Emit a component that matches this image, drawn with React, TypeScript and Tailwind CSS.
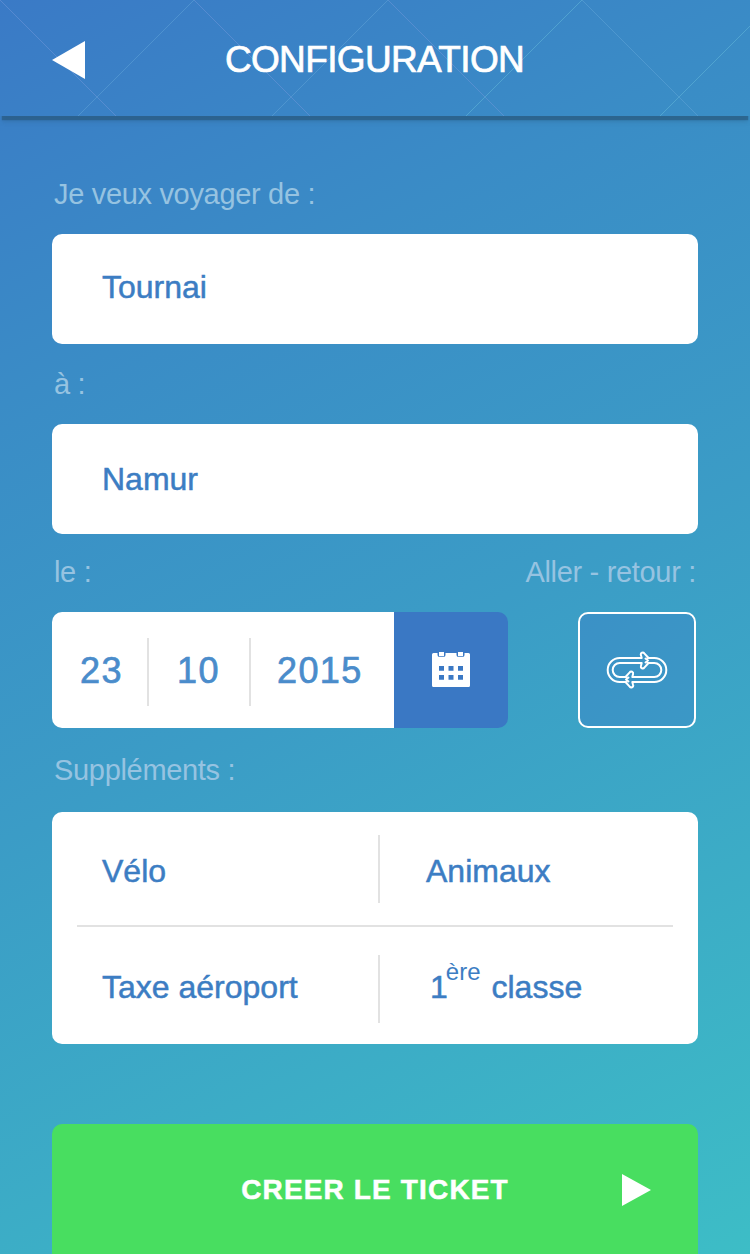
import type { ReactNode } from "react";

function Header() {
  return (
    <header className="relative grid h-[116px] shrink-0 grid-cols-[52px_33px_1fr_85px] items-center">
      <div className="absolute inset-0 shadow-[0_6px_1px_-2px_rgba(38,85,120,0.6),0_8px_4px_-2px_rgba(38,85,120,0.25)]" />
      <svg
        className="absolute inset-0"
        width="750"
        height="116"
        viewBox="0 0 750 116"
        fill="none"
        aria-hidden="true"
      >
        <path d="M0 0l116 116M194 0l116 116M388 0l116 116" stroke="#6d96d8" strokeOpacity=".55" />
        <path d="M194 0L78 116M388 0L272 116M582 0l116 116" stroke="#62a6d8" strokeOpacity=".5" />
        <path d="M582 0L466 116M776 0L660 116" stroke="#62b8d8" strokeOpacity=".55" />
      </svg>
      <svg
        className="relative col-start-2 mt-1"
        width="33"
        height="38"
        viewBox="0 0 33 38"
        fill="white"
        aria-hidden="true"
      >
        <path d="M33 0v38L0 19z" />
      </svg>
      <h1 className="relative mt-[4px] whitespace-nowrap pr-[1px] text-center text-[37px] leading-[44px] tracking-[-0.65px] text-white [-webkit-text-stroke:0.7px_white]">
        CONFIGURATION
      </h1>
    </header>
  );
}

function Label({ children }: { children: ReactNode }) {
  return (
    <span className="block whitespace-nowrap pt-px text-[29px] font-light leading-[39px] tracking-[-0.32px] text-[#96c3e1]">
      {children}
    </span>
  );
}

function Field({ children, className = "" }: { children: ReactNode; className?: string }) {
  return (
    <div
      className={`flex h-[110px] items-center rounded-[10px] bg-white pl-[50px] text-[32px] leading-10 text-[#3c7dc3] [-webkit-text-stroke:0.5px_#3c7dc3] ${className}`}
    >
      {children}
    </div>
  );
}

function CalendarIcon() {
  return (
    <svg width="38" height="36" viewBox="0 0 38 36" aria-hidden="true">
      <path
        fill="white"
        d="M1.500 1h4v2q0 2 2 2h4q2 0 2-2V1h11v2q0 2 2 2h4q2 0 2-2V1h4q1.500 0 1.500 1.500v31q0 1.500-1.500 1.500h-35Q0 35 0 33.500v-31Q0 1 1.500 1z"
      />
      <path fill="white" d="M7 0h5v4.200H7zM26 0h5v4.200h-5z" />
      <path
        fill="#3a78c4"
        d="M7 14h5v4.700H7zM16.500 14h5v4.700h-5zM26 14h5v4.700h-5zM7 23h5v4.700H7zM16.500 23h5v4.700h-5zM26 23h5v4.700h-5z"
      />
    </svg>
  );
}

function LoopHalf() {
  return (
    <>
      <path d="M20.500 31H13.700a12 12 0 0 1 0-24H35.700L34.900 4a1.900 1.900 0 0 1 3.400-1.600L42.500 7" />
      <path d="M20.500 26H13.700a7 7 0 0 1 0-14H35.700L34.900 15a1.900 1.900 0 0 0 3.400 1.600L42.500 12" />
      <path d="M39.500 7.500l2.500 2-2.500 2" />
    </>
  );
}

function RoundTripIcon() {
  return (
    <svg
      width="62"
      height="38"
      viewBox="0 0 62 38"
      fill="none"
      stroke="white"
      strokeWidth="2"
      strokeLinecap="round"
      strokeLinejoin="round"
      aria-hidden="true"
    >
      <LoopHalf />
      <g transform="rotate(180 31 19)">
        <LoopHalf />
      </g>
    </svg>
  );
}

function DateRow() {
  return (
    <div className="mt-5 flex h-[116px] items-stretch justify-between pr-[2px]">
      <div className="flex w-[456px]">
        <div className="flex w-[342px] items-center rounded-l-[10px] bg-white pt-1 text-[36px] leading-10 tracking-[1.4px] text-[#4a8ccb] [-webkit-text-stroke:0.7px_#4a8ccb]">
          <span className="w-[95px] pb-[2px] pl-[28px]">23</span>
          <span className="h-[68px] w-[2px] bg-[#e2e2e2]" />
          <span className="w-[100px] pb-[2px] pl-[28px]">10</span>
          <span className="h-[68px] w-[2px] bg-[#e2e2e2]" />
          <span className="pb-[2px] pl-[26px]">2015</span>
        </div>
        <button className="flex flex-1 items-center justify-center rounded-r-[10px] bg-[#3a78c4]">
          <CalendarIcon />
        </button>
      </div>
      <button className="flex w-[118px] items-center justify-center rounded-[10px] border-2 border-white bg-linear-to-br from-[#3b91c6] to-[#3b98c6]">
        <RoundTripIcon />
      </button>
    </div>
  );
}

function Extras() {
  return (
    <div className="mt-[22px] flex h-[232px] flex-col rounded-[10px] bg-white px-[25px] text-[32px] leading-10 text-[#3c7dc3] [-webkit-text-stroke:0.5px_#3c7dc3]">
      <div className="flex h-[113px] items-center">
        <span className="w-[301px] pl-[25px] pt-1">Vélo</span>
        <span className="h-[68px] w-[2px] bg-[#e2e2e2]" />
        <span className="pl-[46px] pt-1">Animaux</span>
      </div>
      <div className="h-[2px] bg-[#e2e2e2]" />
      <div className="flex h-[117px] items-center pt-[7px]">
        <span className="w-[301px] pb-1 pl-[25px]">Taxe aéroport</span>
        <span className="h-[68px] w-[2px] bg-[#e2e2e2]" />
        <span className="flex pb-1 pl-[50px]">
          1
          <sup className="top-[-15px] ml-[-2px] mr-[11px] text-[24px] leading-10 [-webkit-text-stroke:0px]">
            ère
          </sup>
          classe
        </span>
      </div>
    </div>
  );
}

export default function App() {
  return (
    <div className="flex h-[1254px] w-[750px] flex-col overflow-hidden bg-[linear-gradient(154deg,#3a7ac6_0%,#3a8cc6_25%,#3b9cc6_52%,#3dbdc6_100%)] font-['Liberation_Sans',Arial,sans-serif]">
      <Header />
      <main className="flex flex-1 flex-col px-[52px] pt-[58px]">
        <div className="pl-[2px]">
          <Label>Je veux voyager de :</Label>
        </div>
        <Field className="mt-5 pb-1">Tournai</Field>
        <div className="mt-5 pl-[2px]">
          <Label>à :</Label>
        </div>
        <Field className="mt-5">Namur</Field>
        <div className="mt-[18px] flex justify-between pl-[2px] pr-[2px]">
          <Label>le :</Label>
          <Label>Aller - retour :</Label>
        </div>
        <DateRow />
        <div className="mt-[22px] pl-[2px]">
          <Label>Suppléments :</Label>
        </div>
        <Extras />
        <button className="mt-20 grid h-[130px] grid-cols-[76px_1fr_76px] items-center rounded-t-[10px] bg-[#48de60] text-white">
          <span className="col-start-2 mt-[2px] whitespace-nowrap text-[28px] font-bold leading-10 tracking-[1.15px] [-webkit-text-stroke:0.5px_white]">
            CREER LE TICKET
          </span>
          <svg
            className="mt-[2px]"
            width="29"
            height="32"
            viewBox="0 0 29 32"
            fill="white"
            aria-hidden="true"
          >
            <path d="M0 0l29 16L0 32z" />
          </svg>
        </button>
      </main>
    </div>
  );
}
